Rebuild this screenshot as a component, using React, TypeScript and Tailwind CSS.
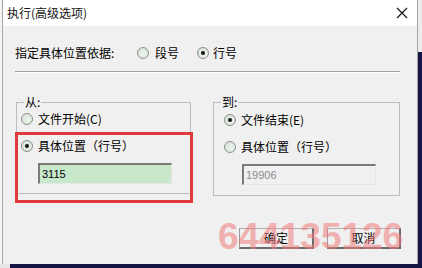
import React from "react";

const cjk = { fontFamily: '"Noto Sans CJK SC", "Noto Sans", sans-serif' };

function Radio({ checked, label, labelGap = "ml-[5px]" }: { checked?: boolean; label: string; labelGap?: string }) {
  return (
    <div className="flex h-[16px] items-center">
      <span className="flex h-[12px] w-[12px] items-center justify-center rounded-full border border-[#8d8f8f] bg-[radial-gradient(circle_at_60%_60%,#eef5ee,#cfdfd0)]">
        {checked ? <span className="h-[4px] w-[4px] rounded-full bg-[#111]" /> : null}
      </span>
      <span className={`${labelGap} text-[12px] leading-[16px] text-black`}>{label}</span>
    </div>
  );
}

function GroupBox({
  title,
  className,
  children,
}: {
  title: string;
  className: string;
  children: React.ReactNode;
}) {
  return (
    <div className={`relative border border-[#bcbcbc] ${className}`}>
      <span className="absolute left-[7px] top-[-9px] bg-[#f0f0f0] px-[1px] text-[12px] leading-[16px] text-black">
        {title}
      </span>
      {children}
    </div>
  );
}

function Field({ value, disabled }: { value: string; disabled?: boolean }) {
  return (
    <div
      className={`flex h-[21px] w-[134px] items-center border-l-2 border-t-2 border-b border-r border-l-[#7a7a7a] border-t-[#7a7a7a] border-b-[#e6e6e6] border-r-[#e6e6e6] pl-[2px] text-[11px] ${
        disabled ? "bg-[#f0f0f0] text-[#8c8c8c]" : "bg-[#c8e8cc] text-black"
      }`}
      style={{ fontFamily: '"Liberation Sans", Arial, sans-serif' }}
    >
      {value}
    </div>
  );
}

function Btn({ label, w }: { label: string; w: string }) {
  return (
    <button
      type="button"
      className={`flex h-[21px] ${w} items-center justify-center border-l border-t border-b-2 border-r-2 border-l-[#9a9a9a] border-t-[#b0b0b0] border-b-[#6a6a6a] border-r-[#6a6a6a] bg-[#f0f0f0] text-[12px] leading-none text-black`}
    >
      {label}
    </button>
  );
}

export default function App() {
  return (
    <div className="flex h-[268px] w-[422px] flex-col overflow-hidden bg-[#f4f4f4]" style={cjk}>
      <div className="flex h-[264px]">
        <div className="relative ml-[2px] flex w-[416px] flex-col border-l border-r border-[#a6a6a6] bg-[#f0f0f0]">
          {/* title bar */}
          <div className="flex h-[26px] items-center justify-between bg-white pl-[4px] pr-[8px]">
            <span className="text-[12px] leading-none text-[#111]">执行(高级选项)</span>
            <svg width="12" height="12" viewBox="0 0 12 12" className="mr-[1px]">
              <path d="M1 1 L11 11 M11 1 L1 11" stroke="#111" strokeWidth="1.1" fill="none" />
            </svg>
          </div>

          {/* body */}
          <div className="flex flex-col pl-[12px]">
            <div className="mt-[19px] flex h-[16px] items-center">
              <span className="w-[122px] text-[12px] leading-[16px] text-black">指定具体位置依据:</span>
              <Radio label="段号" labelGap="ml-[6px]" />
              <div className="ml-[18px]">
                <Radio checked label="行号" labelGap="ml-[4px]" />
              </div>
            </div>

            <div className="mt-[10px] h-[2px] w-[385px] border-t border-b border-t-[#a0a0a0] border-b-white" />

            <div className="mt-[29px] flex items-start">
              <GroupBox title="从:" className="ml-[1px] h-[92px] w-[175px]">
                <div className="flex flex-col pl-[4px] pt-[8px]">
                  <Radio label="文件开始(C)" />
                  <div className="mt-[11px]">
                    <Radio checked label="具体位置（行号）" />
                  </div>
                  <div className="ml-[17px] mt-[9px]">
                    <Field value="3115" />
                  </div>
                </div>
                <div className="pointer-events-none absolute left-[-2px] top-[29px] h-[71px] w-[178px] border-[3px] border-[#e0393e]" />
              </GroupBox>

              <GroupBox title="到:" className="ml-[22px] h-[94px] w-[187px]">
                <div className="flex flex-col pl-[10px] pt-[9px]">
                  <Radio checked label="文件结束(E)" />
                  <div className="mt-[11px]">
                    <Radio label="具体位置（行号）" />
                  </div>
                  <div className="ml-[18px] mt-[9px]">
                    <Field value="19906" disabled />
                  </div>
                </div>
              </GroupBox>
            </div>

            <div className="relative mt-[32px] flex gap-[13px] pl-[224px]">
              <Btn label="确定" w="w-[75px]" />
              <Btn label="取消" w="w-[74px]" />
              <span
                className="pointer-events-none absolute left-[203px] top-[-10px] text-[37px] font-bold leading-[37px] text-[#f07c7c] opacity-55"
                style={{ fontFamily: '"Liberation Sans", Arial, sans-serif' }}
              >
                644135126
              </span>
            </div>
          </div>
        </div>
        <div className="flex w-[4px] flex-col">
          <div className="h-[52px] bg-[#ececec]" />
          <div className="flex-1 bg-[#161644]" />
        </div>
      </div>
      <div className="flex h-[4px]">
        <div className="w-[10px] bg-[#e6e6e6]" />
        <div className="flex-1 bg-[#161644]" />
      </div>
    </div>
  );
}
